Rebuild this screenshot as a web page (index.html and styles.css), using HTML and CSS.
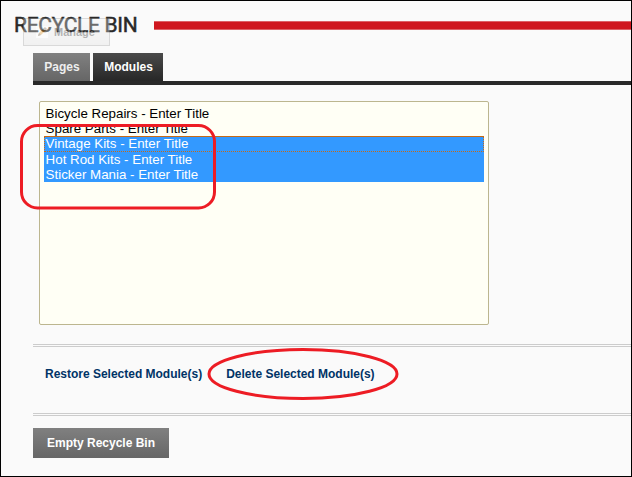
FILE: index.html
```html
<!DOCTYPE html>
<html lang="en">
<head>
<meta charset="utf-8">
<title>Recycle Bin</title>
<link rel="stylesheet" href="styles.css">
</head>
<body>
<main class="module">
  <header class="module-head">
    <h1>RECYCLE BIN</h1>
    <span class="head-rule"></span>
    <div class="manage">
      <svg class="pencil" viewBox="0 0 12 12"><rect width="12" height="12" fill="#fff"/><path d="M2 10l1-3 5-5 2 2-5 5z" fill="#d98a15"/><path d="M7 3l2-2 2 2-2 2z" fill="#6b5b48"/><path d="M2 10l1-3 2 2z" fill="#444"/></svg>
      <span>Manage</span>
    </div>
  </header>
  <nav class="tabs">
    <a class="tab">Pages</a>
    <a class="tab active">Modules</a>
  </nav>
  <ul class="listbox">
    <li>Bicycle Repairs - Enter Title</li>
    <li>Spare Parts - Enter Title</li>
    <li class="selected focused">Vintage Kits - Enter Title</li>
    <li class="selected">Hot Rod Kits - Enter Title</li>
    <li class="selected">Sticker Mania - Enter Title</li>
  </ul>
  <div class="actions">
    <a>Restore Selected Module(s)</a>
    <a>Delete Selected Module(s)</a>
  </div>
  <button class="empty">Empty Recycle Bin</button>
</main>
<svg class="marks" viewBox="0 0 632 477">
  <rect x="21.5" y="125.5" width="193" height="82.5" rx="16"/>
  <ellipse cx="303" cy="374" rx="94" ry="24.5"/>
</svg>
</body>
</html>
```
FILE: styles.css
```css
* { box-sizing: border-box; }
body {
  margin: 0;
  font-family: "Liberation Sans", Arial, sans-serif;
  font-size: 12px;
}
.module {
  width: 632px;
  height: 477px;
  border: 1px solid #000;
  padding-left: 32px;
  background: #fafafa;
  overflow: hidden;
}
.module-head {
  position: relative;
  display: flex;
  height: 52px;
  margin-left: -19px;
}
h1 {
  flex: none;
  width: 140px;
  margin: 0;
  padding-top: 10px;
  font: 400 21px/28px Roboto, sans-serif;
  letter-spacing: -0.3px;
  white-space: nowrap;
  color: #292929;
  -webkit-text-stroke: 0.5px #292929;
}
.head-rule {
  flex: 1;
  height: 9px;
  margin-top: 20px;
  background: #cf171f;
  border: solid #dc6166;
  border-width: 1px 0;
}
.manage {
  position: absolute;
  left: 9px;
  top: 17px;
  width: 87px;
  height: 28px;
  display: flex;
  align-items: center;
  gap: 6px;
  padding-left: 12px;
  border: 1px solid #999;
  background: linear-gradient(#f6f6f6, #e0e0e0);
  font-size: 11px;
  font-weight: bold;
  color: #222;
  opacity: 0.33;
}
.pencil { width: 12px; height: 12px; }
.tabs {
  display: flex;
  gap: 3px;
  height: 32px;
  border-bottom: 4px solid #292929;
}
.tab {
  width: 57px;
  padding-left: 1px;
  line-height: 28px;
  text-align: center;
  font-weight: bold;
  color: #eee;
  background: linear-gradient(#808080, #666);
}
.tab.active {
  width: 70px;
  color: #fff;
  background: linear-gradient(#4a4a4a, #272727);
}
.listbox {
  width: 450px;
  height: 224px;
  margin: 16px 0 0 6px;
  padding: 3.6px 4px 4px;
  border: 1px solid #bcb68f;
  border-radius: 2px;
  background: #fffff5;
  list-style: none;
  font-size: 13.33px;
  color: #000;
}
.listbox li {
  height: 15.33px;
  line-height: 15.33px;
  padding-left: 1.6px;
}
.listbox .selected {
  color: #fff;
  background: #39f;
}
.listbox .focused {
  border: 1px dotted #c76a14;
  border-top-style: solid;
  padding-left: 0.6px;
  line-height: 13.5px;
}
.actions {
  display: flex;
  gap: 24px;
  height: 72px;
  margin-top: 19px;
  padding: 19px 12px 0;
  border: double #ccc;
  border-width: 3px 0;
  line-height: 16px;
  font-weight: bold;
  letter-spacing: -0.01px;
  color: #036;
}
.empty {
  display: block;
  width: 136px;
  height: 30px;
  margin-top: 12px;
  padding: 0;
  border: 0;
  background: linear-gradient(#808080, #666);
  font: bold 12px "Liberation Sans", Arial, sans-serif;
  color: #fff;
}
.marks {
  position: absolute;
  left: 0;
  top: 0;
  width: 632px;
  height: 477px;
  fill: none;
  stroke: #ed1c24;
  stroke-width: 3;
  pointer-events: none;
}
```
